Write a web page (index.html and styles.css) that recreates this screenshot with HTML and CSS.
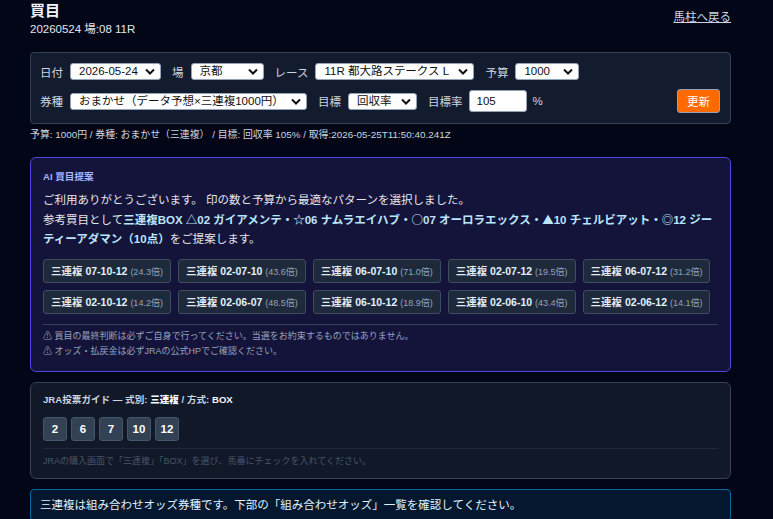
FILE: index.html
```html
<!DOCTYPE html>
<html lang="ja">
<head>
    <meta charset="UTF-8">
    <meta name="viewport" content="width=device-width, initial-scale=1.0">
    <title>買目</title>
    <link rel="stylesheet" href="styles.css">
</head>
<body>
<div class="page">

    <!-- Header -->
    <div class="header">
        <div>
            <h1>買目</h1>
            <div class="race-id">20260524 場:08 11R</div>
        </div>
        <a href="#" class="back-link">馬柱へ戻る</a>
    </div>

    <!-- Filter form -->
    <div class="filter-card">
        <div class="filter-row">
            <label class="field"><span class="field-label">日付</span>
                <select class="sel sel-date"><option>2026-05-24</option></select></label>
            <label class="field"><span class="field-label">場</span>
                <select class="sel sel-place"><option>京都</option></select></label>
            <label class="field"><span class="field-label">レース</span>
                <select class="sel sel-race"><option>11R 都大路ステークス L</option></select></label>
            <label class="field"><span class="field-label">予算</span>
                <select class="sel sel-budget"><option>1000</option></select></label>
        </div>
        <div class="filter-row">
            <label class="field"><span class="field-label">券種</span>
                <select class="sel sel-type"><option>おまかせ（データ予想×三連複1000円）</option></select></label>
            <label class="field"><span class="field-label">目標</span>
                <select class="sel sel-goal"><option>回収率</option></select></label>
            <label class="field tight"><span class="field-label">目標率</span>
                <input type="text" class="rate-input" value="105"><span class="pct">%</span></label>
            <button class="update-btn">更新</button>
        </div>
    </div>

    <div class="meta">予算: 1000円 / 券種: おまかせ（三連複） / 目標: 回収率 105% / 取得:2026-05-25T11:50:40.241Z</div>

    <!-- AI suggestion -->
    <div class="ai-card">
        <div class="ai-title">AI 買目提案</div>
        <p class="ai-text">ご利用ありがとうございます。 印の数と予算から最適なパターンを選択しました。<br>参考買目として<strong>三連複BOX <span class="mk">△</span>02 ガイアメンテ・<span class="mk">☆</span>06 ナムラエイハブ・<span class="mk">○</span>07 オーロラエックス・<span class="mk">▲</span>10 チェルビアット・<span class="mk">◎</span>12 ジーティーアダマン（10点）</strong>をご提案します。</p>
        <div class="chips">
            <span class="chip">三連複 <b>07-10-12</b> <small>(24.3倍)</small></span>
            <span class="chip">三連複 <b>02-07-10</b> <small>(43.6倍)</small></span>
            <span class="chip">三連複 <b>06-07-10</b> <small>(71.0倍)</small></span>
            <span class="chip">三連複 <b>02-07-12</b> <small>(19.5倍)</small></span>
            <span class="chip">三連複 <b>06-07-12</b> <small>(31.2倍)</small></span>
            <span class="chip">三連複 <b>02-10-12</b> <small>(14.2倍)</small></span>
            <span class="chip">三連複 <b>02-06-07</b> <small>(48.5倍)</small></span>
            <span class="chip">三連複 <b>06-10-12</b> <small>(18.9倍)</small></span>
            <span class="chip">三連複 <b>02-06-10</b> <small>(43.4倍)</small></span>
            <span class="chip">三連複 <b>02-06-12</b> <small>(14.1倍)</small></span>
        </div>
        <div class="warnings">
            <div>⚠ 買目の最終判断は必ずご自身で行ってください。当選をお約束するものではありません。</div>
            <div>⚠ オッズ・払戻金は必ずJRAの公式HPでご確認ください。</div>
        </div>
    </div>

    <!-- JRA guide -->
    <div class="guide-card">
        <div class="guide-title">JRA投票ガイド — 式別: <b>三連複</b> / 方式: <b>BOX</b></div>
        <div class="nums">
            <span class="num">2</span>
            <span class="num">6</span>
            <span class="num">7</span>
            <span class="num">10</span>
            <span class="num">12</span>
        </div>
        <div class="guide-note">JRAの購入画面で「三連複」「BOX」を選び、馬番にチェックを入れてください。</div>
    </div>

    <div class="info-bar">三連複は組み合わせオッズ券種です。下部の「組み合わせオッズ」一覧を確認してください。</div>

</div>
</body>
</html>
```

FILE: styles.css
```css
* {
    margin: 0;
    padding: 0;
    box-sizing: border-box;
    font-family: "Liberation Sans", "Noto Sans CJK JP", sans-serif;
}
body {
    background-color: #020617;
    color: #e2e8f0;
    padding: 0 30px;
}
.page {
    width: 701px;
}
.header {
    display: flex;
    justify-content: space-between;
    align-items: flex-start;
}
h1 {
    font-size: 15px;
    font-weight: 700;
    line-height: 20px;
    margin-top: 1px;
    color: #f1f5f9;
}
.race-id {
    font-size: 11.5px;
    line-height: 16px;
    color: #e2e8f0;
}
.back-link {
    font-size: 11.5px;
    line-height: 16px;
    margin-top: 9px;
    color: #cbd5e1;
}
.filter-card {
    margin-top: 15px;
    background: #131b2e;
    border: 1px solid #334155;
    border-radius: 4px;
    padding: 10px 9px;
    display: flex;
    flex-direction: column;
    gap: 9px;
}
.filter-row {
    display: flex;
    align-items: center;
    gap: 11px;
}
.field {
    display: flex;
    align-items: center;
    gap: 7px;
}
.field.tight {
    gap: 6px;
}
.field-label {
    font-size: 11.5px;
    color: #cbd5e1;
}
.sel {
    appearance: none;
    -webkit-appearance: none;
    height: 17px;
    font-size: 11.5px;
    color: #111;
    background: #fff url("data:image/svg+xml,%3Csvg xmlns='http://www.w3.org/2000/svg' width='10' height='7'%3E%3Cpath d='M1 1.5l4 4 4-4' fill='none' stroke='%23111' stroke-width='2'/%3E%3C/svg%3E") no-repeat right 5px center;
    border: 1px solid #94a3b8;
    border-radius: 3px;
    padding: 0 18px 0 8px;
    line-height: 15px;
}
.sel-date { width: 91px; }
.sel-place { width: 73px; }
.sel-race { width: 159px; }
.sel-budget { width: 64px; }
.sel-type { width: 237px; }
.sel-goal { width: 69px; }
.rate-input {
    width: 58px;
    height: 22px;
    font-size: 11.5px;
    color: #111;
    background: #fff;
    border: 1px solid #94a3b8;
    border-radius: 3px;
    padding: 0 7px;
}
.pct {
    font-size: 11.5px;
    color: #cbd5e1;
}
.update-btn {
    margin-left: auto;
    margin-right: 1px;
    width: 43px;
    height: 24px;
    background-color: #ff6a00;
    color: white;
    border: 1px solid #94a3b8;
    border-radius: 3px;
    font-size: 11.5px;
}
.meta {
    margin-top: 5px;
    font-size: 9.9px;
    line-height: 12px;
    color: #cbd5e1;
}
.ai-card {
    margin-top: 16px;
    background: #14133a;
    border: 1px solid #4f46e5;
    border-radius: 6px;
    padding: 13px 12px 12px;
}
.ai-title {
    font-size: 9.6px;
    font-weight: 700;
    line-height: 12px;
    color: #a5b4fc;
}
.ai-text {
    margin-top: 8px;
    font-size: 11.5px;
    line-height: 19px;
    color: #e5e7eb;
}
.ai-text strong {
    color: #bae6fd;
}
.mk {
    font-family: "Noto Sans CJK JP", sans-serif;
}
.chips {
    margin-top: 10px;
    display: flex;
    flex-wrap: wrap;
    gap: 7px;
}
.chip {
    height: 24px;
    line-height: 22px;
    padding: 0 7px;
    background: #1e293b;
    border: 1px solid #3f4d63;
    border-radius: 3px;
    font-size: 10.5px;
    font-weight: 600;
    color: #e2e8f0;
    white-space: nowrap;
}
.chip b {
    color: #e0f2fe;
}
.chip small {
    font-size: 9px;
    font-weight: 400;
    color: #94a3b8;
}
.warnings {
    margin-top: 10px;
    border-top: 1px solid #334155;
    padding-top: 4px;
    font-size: 9px;
    line-height: 15px;
    color: #94a3b8;
}
.guide-card {
    margin-top: 10px;
    background: #111827;
    border: 1px solid #374151;
    border-radius: 6px;
    padding: 10px 12px 10px;
}
.guide-title {
    font-size: 9.6px;
    font-weight: 600;
    line-height: 13px;
    color: #cbd5e1;
}
.guide-title b {
    color: #f8fafc;
}
.nums {
    margin-top: 11px;
    display: flex;
    gap: 4px;
}
.num {
    width: 24px;
    height: 24px;
    display: flex;
    align-items: center;
    justify-content: center;
    background: #334155;
    border: 1px solid #475569;
    border-radius: 3px;
    font-size: 11.5px;
    font-weight: 700;
    color: #fff;
}
.guide-note {
    margin-top: 7px;
    border-top: 1px solid #1e293b;
    padding-top: 6px;
    font-size: 9px;
    line-height: 13px;
    color: #475569;
}
.info-bar {
    margin-top: 10px;
    background: #04172f;
    border: 1px solid #0369a1;
    border-radius: 4px;
    padding: 7px 9px;
    font-size: 11.5px;
    line-height: 16px;
    color: #e0f2fe;
}
```
